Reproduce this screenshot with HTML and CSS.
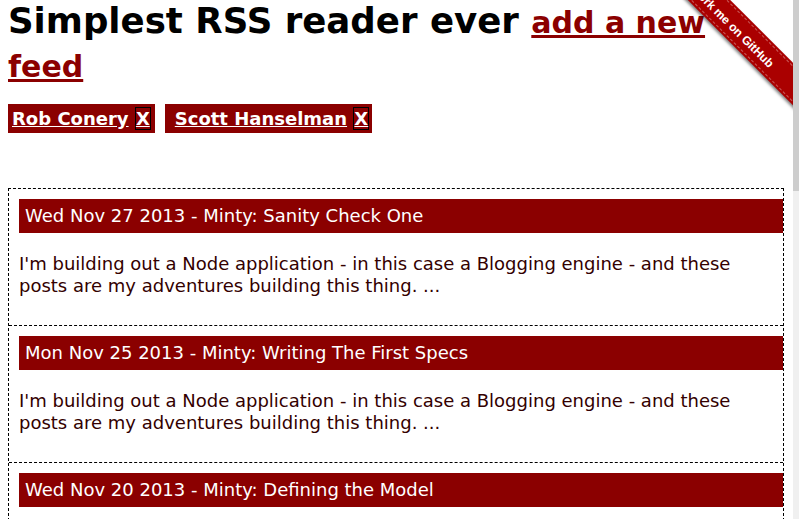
FILE: index.html
```html
<!DOCTYPE html>
<html lang="en">
<head>
<meta charset="utf-8">
<title>Simplest RSS reader ever</title>
<link rel="stylesheet" href="styles.css">
</head>
<body>
<h1 class="title">Simplest RSS reader ever <a class="add-link" href="#">add a new feed</a></h1>

<ul class="feed-tags">
  <li class="feed-tag"><a class="feed-name" href="#">Rob Conery</a> <a class="feed-remove" href="#">X</a></li>
  <li class="feed-tag feed-tag-wide"><a class="feed-name" href="#">Scott Hanselman</a> <a class="feed-remove" href="#">X</a></li>
</ul>

<div class="posts">
  <div class="post">
    <div class="post-title">Wed Nov 27 2013 - Minty: Sanity Check One</div>
    <p class="post-body">I'm building out a Node application - in this case a Blogging engine - and these posts are my adventures building this thing. ...</p>
  </div>
  <div class="post">
    <div class="post-title">Mon Nov 25 2013 - Minty: Writing The First Specs</div>
    <p class="post-body">I'm building out a Node application - in this case a Blogging engine - and these posts are my adventures building this thing. ...</p>
  </div>
  <div class="post">
    <div class="post-title">Wed Nov 20 2013 - Minty: Defining the Model</div>
    <p class="post-body">I'm building out a Node application - in this case a Blogging engine - and these posts are my adventures building this thing. ...</p>
  </div>
</div>

<div class="ribbon">
  <a class="ribbon-band" href="#">Fork me on GitHub</a>
</div>

<div class="scrollbar"><div class="scrollbar-thumb"></div></div>
</body>
</html>
```

FILE: styles.css
```css
html {
  overflow: hidden;
  background: #fff;
}

body {
  margin: 0 15px 0 8px;
  font-family: "DejaVu Sans", Verdana, sans-serif;
  font-size: 18px;
  color: #000;
}

.title {
  margin: 0;
  font-size: 35.6px;
  line-height: 42px;
  font-weight: bold;
  color: #000;
}

.add-link {
  font-size: 30px;
  color: #8b0000;
  text-decoration: underline;
}

.feed-tags {
  list-style: none;
  margin: 16px 0 55px;
  padding: 0;
  display: flex;
  gap: 10px;
}

.feed-tag {
  background: #8b0000;
  padding: 4px 4px 4px 4px;
  line-height: 21px;
  font-weight: bold;
}

.feed-tag-wide {
  padding-left: 10px;
  padding-right: 3px;
}

.feed-name {
  color: #fff;
  text-decoration: underline;
}

.feed-remove {
  color: #fff;
  text-decoration: underline;
  border: 1px solid #000;
  padding: 0;
}

.posts {
  border: 1px dashed #000;
}

.post {
  padding: 10px 0 10px 10px;
  border-bottom: 1px dashed #000;
}

.post-title {
  background: #8b0000;
  color: #fff;
  padding: 6px 6px;
  line-height: 22px;
}

.post-body {
  margin: 20px 0 18px;
  line-height: 22px;
  color: #300;
}

.ribbon {
  position: absolute;
  top: 0;
  right: 6px;
  width: 149px;
  height: 149px;
  overflow: hidden;
}

.ribbon-band {
  position: absolute;
  left: -39px;
  top: 11px;
  width: 260px;
  height: 30px;
  box-sizing: border-box;
  transform: rotate(45deg);
  background: #a00;
  color: #fff;
  font-family: "Liberation Sans", Arial, sans-serif;
  font-size: 12px;
  font-weight: bold;
  line-height: 35px;
  text-align: center;
  text-decoration: none;
  outline: 1px dashed rgba(255, 255, 255, 0.35);
  outline-offset: -3px;
  box-shadow: 0 2px 3px rgba(0, 0, 0, 0.5);
}

.scrollbar {
  position: fixed;
  top: 0;
  right: 0;
  width: 6px;
  height: 100%;
  background: #f0f0f0;
}

.scrollbar-thumb {
  height: 191px;
  background: #cdcdcd;
}
```
